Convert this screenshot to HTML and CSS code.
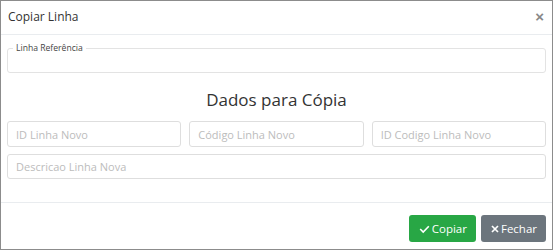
FILE: index.html
```html
<!DOCTYPE html>
<html lang="pt">
<head>
  <meta charset="UTF-8" />
  <meta name="viewport" content="width=device-width, initial-scale=1.0" />
  <title>Copiar Linha</title>
  <link rel="stylesheet" href="styles.css">
</head>
<body>
  <div class="modal">
    <div class="modal-header">
      <h5 class="modal-title">Copiar Linha</h5>
      <button class="close" type="button">&times;</button>
    </div>

    <div class="modal-body">
      <fieldset class="ref">
        <legend>Linha Referência</legend>
      </fieldset>

      <h4 class="section-title">Dados para Cópia</h4>

      <div class="row-3">
        <input class="form-control" type="text" placeholder="ID Linha Novo">
        <input class="form-control" type="text" placeholder="Código Linha Novo">
        <input class="form-control" type="text" placeholder="ID Codigo Linha Novo">
      </div>
      <div class="row-1">
        <input class="form-control" type="text" placeholder="Descricao Linha Nova">
      </div>
    </div>

    <div class="modal-footer">
      <button class="btn btn-success" type="button">
        <svg width="11" height="10" viewBox="0 0 11 10"><path d="M1.2 5 L4.2 8 L9.8 2.2" fill="none" stroke="#fff" stroke-width="1.6"/></svg>
        Copiar
      </button>
      <button class="btn btn-secondary" type="button">
        <svg width="8" height="8" viewBox="0 0 8 8"><path d="M1 1 L7 7 M7 1 L1 7" fill="none" stroke="#fff" stroke-width="1.7"/></svg>
        Fechar
      </button>
    </div>
  </div>
</body>
</html>
```

FILE: styles.css
```css
* {
  box-sizing: border-box;
}
body {
  margin: 0;
  font-family: "Open Sans", sans-serif;
  color: #333;
  background: #fff;
}
.modal {
  width: 553px;
  height: 250px;
  border: 1px solid #8c8c8c;
  display: flex;
  flex-direction: column;
}
.modal-header {
  height: 34px;
  display: flex;
  align-items: center;
  justify-content: space-between;
  padding: 0 8px 3px 7px;
  border-bottom: 1px solid #e9ecef;
}
.modal-title {
  margin: 0;
  font-size: 12px;
  font-weight: normal;
  color: #333;
}
.close {
  border: none;
  background: none;
  padding: 0;
  font-size: 15px;
  font-weight: bold;
  color: #888;
  line-height: 1;
  cursor: pointer;
}
.modal-body {
  padding: 7px 6px 0 6px;
  flex: 1;
}
.ref {
  margin: 0;
  padding: 0;
  height: 31px;
  border: 1px solid #e3e3e3;
  border-radius: 3px;
}
.ref legend {
  margin-left: 5px;
  padding: 0 3px;
  font-size: 8.6px;
  color: #444;
}
.section-title {
  margin: 11px 0 0;
  text-align: center;
  font-size: 17px;
  font-weight: normal;
  color: #333;
  line-height: 32px;
}
.row-3 {
  display: flex;
  gap: 8px;
  margin-top: 5px;
}
.row-1 {
  display: flex;
  margin-top: 7px;
}
.form-control {
  flex: 1;
  min-width: 0;
  height: 26px;
  padding: 0 8px;
  border: 1px solid #dedede;
  border-radius: 3px;
  font-family: "Open Sans", sans-serif;
  font-size: 11px;
  color: #333;
}
.row-1 .form-control {
  height: 25px;
}
.form-control::placeholder {
  color: #bcbcbc;
}
.modal-footer {
  height: 47px;
  display: flex;
  align-items: flex-end;
  justify-content: flex-end;
  gap: 5px;
  padding: 0 6px 7px;
  border-top: 1px solid #e9ecef;
}
.btn {
  height: 27px;
  display: flex;
  align-items: center;
  gap: 2px;
  padding: 0 9px 0 10px;
  border: none;
  border-radius: 3px;
  font-family: "Open Sans", sans-serif;
  font-size: 11.5px;
  color: #fff;
  cursor: pointer;
}
.btn-success {
  background: #28a745;
}
.btn-secondary {
  background: #6c757d;
}
```
